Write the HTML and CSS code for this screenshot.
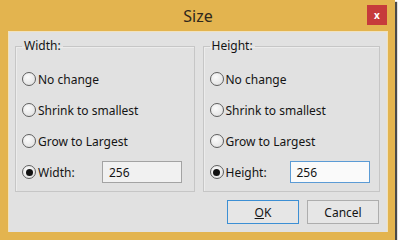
FILE: index.html
```html
<!DOCTYPE html>
<html lang="en">
<head>
  <meta charset="UTF-8" />
  <title>Size</title>
  <link rel="stylesheet" href="styles.css">
</head>
<body>
  <div class="window">
    <div class="titlebar">
      <span class="title">Size</span>
      <span class="close">x</span>
    </div>

    <div class="content">
      <div class="groups">
        <fieldset class="group">
          <legend>Width:</legend>
          <div class="row"><span class="radio"></span>No change</div>
          <div class="row"><span class="radio"></span>Shrink to smallest</div>
          <div class="row"><span class="radio"></span>Grow to Largest</div>
          <div class="row">
            <span class="radio checked"></span><span class="label">Width:</span>
            <span class="textbox">256</span>
          </div>
        </fieldset>

        <fieldset class="group">
          <legend>Height:</legend>
          <div class="row"><span class="radio"></span>No change</div>
          <div class="row"><span class="radio"></span>Shrink to smallest</div>
          <div class="row"><span class="radio"></span>Grow to Largest</div>
          <div class="row">
            <span class="radio checked"></span><span class="label">Height:</span>
            <span class="textbox focused">256</span>
          </div>
        </fieldset>
      </div>

      <div class="buttons">
        <span class="btn default"><u>O</u>K</span>
        <span class="btn">Cancel</span>
      </div>
    </div>
  </div>
</body>
</html>
```

FILE: styles.css
```css
body {
  margin: 0;
  background: #ffffff;
  font-family: "Noto Sans", "Open Sans", sans-serif;
  font-size: 12px;
  color: #141414;
}

.window {
  width: 395px;
  height: 240px;
  box-sizing: border-box;
  background: #e3b44f;
  padding: 0 7px 8px 8px;
  display: flex;
  flex-direction: column;
  box-shadow: 2px 2px 1px #4a4a4a;
}

.titlebar {
  height: 31px;
  display: flex;
  align-items: center;
  justify-content: center;
  position: relative;
}

.title {
  font-size: 16px;
  color: #2e271c;
}

.close {
  position: absolute;
  right: 1px;
  top: 5px;
  width: 20px;
  height: 20px;
  background: #c63b3b;
  color: #fff;
  font-size: 10px;
  font-weight: bold;
  display: flex;
  align-items: center;
  justify-content: center;
  line-height: 1;
}

.content {
  flex: 1;
  background: #e1e1e1;
  padding: 6px 7px 0 6px;
  border: 1px solid #f2e2bd;
  border-bottom: none;
}

.groups {
  display: flex;
  gap: 8px;
}

.group {
  margin: 0;
  width: 180px;
  box-sizing: border-box;
  border: 1px solid #c6c6c6;
  box-shadow: inset 1px 1px 0 #ececec;
  padding: 14px 6px 8px 6px;
  display: flex;
  flex-direction: column;
  gap: 9px;
}

.group + .group {
  width: 178px;
}

.group legend {
  padding: 0 2px;
  line-height: 16px;
}

.row {
  height: 22px;
  display: flex;
  align-items: center;
  gap: 2px;
}

.radio {
  width: 12px;
  height: 12px;
  border: 1px solid #5f5f5f;
  border-radius: 50%;
  background: radial-gradient(circle at 40% 35%, #fbfbfb, #dcdcdc);
  display: flex;
  align-items: center;
  justify-content: center;
}

.radio.checked::after {
  content: "";
  width: 7px;
  height: 7px;
  border-radius: 50%;
  background: #111;
}

.label {
  width: 62px;
}

.textbox {
  width: 80px;
  height: 22px;
  box-sizing: border-box;
  border: 1px solid #a3a3a3;
  background: #f1f1f1;
  padding-left: 6px;
  display: flex;
  align-items: center;
}

.textbox.focused {
  border-color: #5b9bd5;
  background: #fafafa;
}

.buttons {
  display: flex;
  justify-content: flex-end;
  gap: 8px;
  margin-top: 8px;
  padding-right: 1px;
}

.btn {
  width: 72px;
  height: 24px;
  box-sizing: border-box;
  border: 1px solid #adadad;
  background: #e6e6e6;
  display: flex;
  align-items: center;
  justify-content: center;
}

.btn.default {
  border-color: #3c8fd4;
}
```
